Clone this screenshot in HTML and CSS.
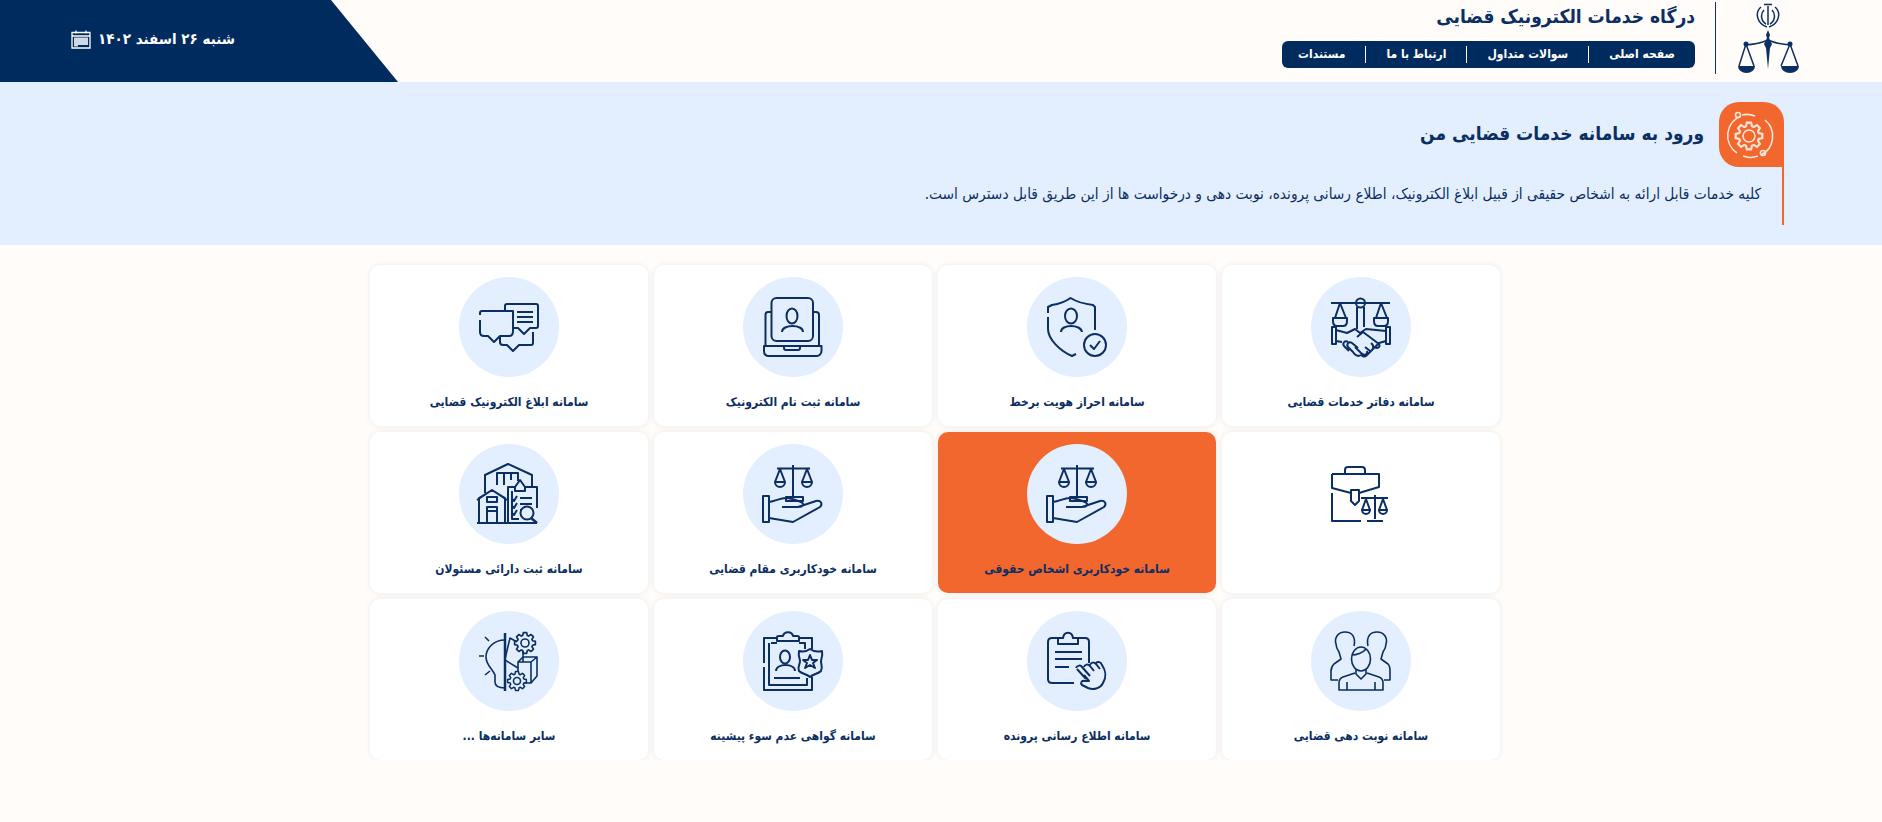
FILE: index.html
```html
<!DOCTYPE html>
<html lang="fa">
<head>
    <meta charset="UTF-8">
    <meta name="viewport" content="width=device-width, initial-scale=1.0">
    <title>درگاه خدمات الکترونیک قضایی</title>
    <link rel="stylesheet" href="styles.css">
</head>
<body>
    <svg class="defs" aria-hidden="true">
        <path id="gear" d="M-2.19-7.17-1.56-9.88 1.56-9.88 2.19-7.17 3.52-6.62 5.88-8.09 8.09-5.88 6.62-3.52 7.17-2.19 9.88-1.56 9.88 1.56 7.17 2.19 6.62 3.52 8.09 5.88 5.88 8.09 3.52 6.62 2.19 7.17 1.56 9.88-1.56 9.88-2.19 7.17-3.52 6.62-5.88 8.09-8.09 5.88-6.62 3.52-7.17 2.19-9.88 1.56-9.88-1.56-7.17-2.19-6.62-3.52-8.09-5.88-5.88-8.09-3.52-6.62Z"/>
        <g id="hand-scale">
            <path d="M34 24.5H67M50 21V53M37 25 32 38M37 25 42 38M64 25 59 38M64 25 69 38"/>
            <path d="M32 38H42A5 5 0 0 1 32 38ZM59 38H69A5 5 0 0 1 59 38ZM43 53H60V57H43Z"/>
            <path d="M20 52H26V78H20ZM26 58C33 57 37 54 43 54 48 54 53 56 58 58 62 60 60 63 55 63H39M55 63 73 57C78 56 80 60 77 63L50 78 26 74"/>
        </g>
    </svg>

    <header class="topbar">
        <div class="date-panel">
            <svg class="cal" viewBox="0 0 20 20" width="20" height="20">
                <path class="cal-line" d="M1 3.5H19V19H1ZM1 7H19M5 1.5V4.5M15 1.5V4.5"/>
                <path class="cal-grid" d="M3 8.5H17V16H7V17.5H3Z"/>
            </svg>
            <span>شنبه ۲۶ اسفند ۱۴۰۲</span>
        </div>
        <div class="brand">
            <div class="brand-text">
                <h1>درگاه خدمات الکترونیک قضایی</h1>
                <nav class="menu">
                    <a href="#">صفحه اصلی</a>
                    <a href="#">سوالات متداول</a>
                    <a href="#">ارتباط با ما</a>
                    <a href="#">مستندات</a>
                </nav>
            </div>
            <svg class="logo" viewBox="-9 0 94 72" width="94" height="72">
                <g class="logo-line">
                    <path d="M36 5C30 10 31 21 42 25M50 5C56 10 55 21 44 25M39 8C35 12 36 19 41 22M47 8C51 12 50 19 45 22"/>
                    <path d="M43 4V23M39 2.500H47"/>
                    <path d="M21 42 14 64M21 42 29 64M65 42 56 64M65 42 73 64M20 43C35 42 38 40 43 38 48 40 51 42 66 43"/>
                </g>
                <path class="logo-fill" d="M13 64H30A8.500 7 0 0 1 13 64ZM56 64H74A9 7 0 0 1 56 64ZM43 28 45 33 44 36 47 42 45 46 43 67 41 46 39 42 42 36 41 33Z"/>
                <circle class="logo-fill" cx="21" cy="42" r="2.500"/>
                <circle class="logo-fill" cx="65" cy="42" r="2.500"/>
            </svg>
        </div>
    </header>

    <section class="intro">
        <div class="intro-box">
            <div class="intro-head">
                <span class="intro-icon">
                    <svg viewBox="0 0 65 65" width="65" height="65">
                        <use href="#gear" transform="translate(30 34) scale(1.35)"/>
                        <circle cx="30" cy="34" r="6"/>
                        <path d="M22 14A21 21 0 0 0 18 51M42 53A21 21 0 0 0 46 18M23 13A21 21 0 0 1 36 14M24 54A21 21 0 0 0 39 54"/>
                        <circle cx="19" cy="13" r="2.500"/>
                        <circle cx="44" cy="51" r="2.500"/>
                    </svg>
                </span>
                <h2>ورود به سامانه خدمات قضایی من</h2>
            </div>
            <p>کلیه خدمات قابل ارائه به اشخاص حقیقی از قبیل ابلاغ الکترونیک، اطلاع رسانی پرونده، نوبت دهی و درخواست ها از این طریق قابل دسترس است.</p>
        </div>
    </section>

    <main class="systems">
        <a class="card" href="#">
            <div class="circle">
                <svg class="ic" viewBox="0 0 100 100">
                    <path d="M20 26H79M46 30V52M53 30V50M29 26 24 41M29 26 35 41M70 26 65 41M70 26 76 41"/>
                    <circle cx="49.500" cy="26" r="4.500"/>
                    <path d="M22 41H36V44C36 48 34 49 32 49H26C24 49 22 48 22 44ZM63 41H77V44C77 48 75 49 73 49H67C65 49 63 48 63 44Z"/>
                    <path d="M21 50H25V67H21ZM75 50H79V67H75ZM25 53 36 56 44 52 49 56 55 52 75 54M25 64 31 65M75 64 68 66 56 78C53 81 50 79 51 77M46 60 52 55 68 67C70 70 66 72 64 70M60 66C64 69 62 74 59 74L54 70M56 74C57 78 53 79 50 76L44 70M50 78C47 80 44 78 42 75L37 70C35 67 38 64 41 66L47 71M37 65C34 63 31 66 33 69L38 74"/>
                </svg>
            </div>
            <span class="label">سامانه دفاتر خدمات قضایی</span>
        </a>
        <a class="card" href="#">
            <div class="circle">
                <svg class="ic" viewBox="0 0 100 100">
                    <path d="M21 36V30L25 28C32 27 38 25 43.500 21 50 25 57 27 66 28L68 30V53M21 40V52C21 62 33 74 45 79L49 77"/>
                    <ellipse cx="44" cy="39" rx="6" ry="7.500"/>
                    <path d="M34 55C34 47 54 47 55 55"/>
                    <circle cx="68" cy="68" r="11"/>
                    <path d="M63 68 67 72 73 64"/>
                </svg>
            </div>
            <span class="label">سامانه احراز هویت برخط</span>
        </a>
        <a class="card" href="#">
            <div class="circle">
                <svg class="ic" viewBox="0 0 100 100">
                    <rect x="28.500" y="21" width="41.500" height="43" rx="5"/>
                    <ellipse cx="49" cy="39" rx="5.500" ry="7.500"/>
                    <path d="M39 55C39 47 60 47 60 55"/>
                    <path d="M28 35H25C23.500 35 22.500 36 22.500 38V68M70 35H73C75 35 76 36 76 38V68M21 69H78.500V74C78.500 77 76 79 74 79H26C23 79 21 77 21 74ZM41 69V71C41 72 42 73 43 73H55C56 73 57 72 57 71V69"/>
                </svg>
            </div>
            <span class="label">سامانه ثبت نام الکترونیک</span>
        </a>
        <a class="card" href="#">
            <div class="circle">
                <svg class="ic" viewBox="0 0 100 100">
                    <path d="M21 38V36C21 35 22 34 23 34H54V54C54 58 52 59 50 59H41L35 65 29 59H25C22 59 21 57 21 55V43"/>
                    <path d="M46 34V29C46 28 47 27 48 27H77C78 27 79 28 79 29V49C79 50 78 51 77 51H71L65 57 59 51H54"/>
                    <path d="M74 55V66C74 67 73 68 72 68H60L54 74 48 68H44C42 68 41 67 41 65V59"/>
                    <path d="M58 35H74M58 40H74M58 45H74"/>
                </svg>
            </div>
            <span class="label">سامانه ابلاغ الکترونیک قضایی</span>
        </a>

        <a class="card" href="#">
            <div class="circle circle-plain">
                <svg class="ic" viewBox="0 0 100 100">
                    <path d="M34 30V26C34 24 35 23 37 23H51C53 23 54 24 54 26V30"/>
                    <path d="M21 30H68V43L48 49M40 49 21 44V30M21 49V77H50"/>
                    <path d="M40 46H48V57L44 61 40 57Z"/>
                    <path d="M50 54H77M64 51V75M56 77H72M55 55 51 66M55 55 59 66M72 55 68 66M72 55 76 66"/>
                    <path d="M51 66H59A4 4 0 0 1 51 66ZM68 66H76A4 4 0 0 1 68 66Z"/>
                </svg>
            </div>
        </a>
        <a class="card card-active" href="#">
            <div class="circle">
                <svg class="ic" viewBox="0 0 100 100"><use href="#hand-scale"/></svg>
            </div>
            <span class="label">سامانه خودکاربری اشخاص حقوقی</span>
        </a>
        <a class="card" href="#">
            <div class="circle">
                <svg class="ic" viewBox="0 0 100 100"><use href="#hand-scale"/></svg>
            </div>
            <span class="label">سامانه خودکاربری مقام قضایی</span>
        </a>
        <a class="card" href="#">
            <div class="circle">
                <svg class="ic" viewBox="0 0 100 100">
                    <path d="M26 49V31L49 20 73 31V43M38 41V29H59V37M45 29V41M52 29V36"/>
                    <path d="M20 79V54L33 46 46 54V79M18 56 33 46 48 56M28 79V63H38V79M28 67H38M28 53H38V58H28ZM18 79H78"/>
                    <path d="M49 79V43H56M66 43H78V64M53 47V75H60"/>
                    <path d="M56 43 61 36 66 43V47H56Z"/>
                    <path d="M53 55 55 57 58 52M53 62 55 64 58 59M53 69 55 71 58 66M61 54H73M61 60H73M61 66H62"/>
                    <circle cx="68" cy="69" r="6.500"/>
                    <path d="M72 74 78 79" class="thick"/>
                </svg>
            </div>
            <span class="label">سامانه ثبت دارائی مسئولان</span>
        </a>

        <a class="card" href="#">
            <div class="circle">
                <svg class="ic thin" viewBox="0 0 100 100">
                    <ellipse cx="50" cy="48" rx="9.500" ry="12"/>
                    <path d="M41 44C45 44 52 42 55 38M45 59V63L50 68 55 63V59"/>
                    <path d="M44 62 32 66C29 67 28 69 28 72V79H72V72C72 69 71 67 68 66L56 62M36 79V71M64 79V71"/>
                    <path d="M43 35C45 26 41 21 34 21 27 21 23 27 25 33 25 36 26 38 28 41L30 48 23 53C21 55 20 57 20 60V69H27"/>
                    <path d="M57 35C55 26 59 21 66 21 73 21 77 27 75 33 75 36 74 38 72 41L70 48 77 53C79 55 79 57 79 60V69H73"/>
                </svg>
            </div>
            <span class="label">سامانه نوبت دهی قضایی</span>
        </a>
        <a class="card" href="#">
            <div class="circle">
                <svg class="ic" viewBox="0 0 100 100">
                    <path d="M31 27H25C22 27 21 29 21 31V68C21 71 22 72 25 72H47M51 27H58C61 27 62 29 62 31V52"/>
                    <path d="M31 33V27H36C37 20 45 20 46 27H51V33Z"/>
                    <path d="M28 41H55M28 48H55M28 56H42"/>
                    <path d="M50 58 59 68M49 57C50 54 54 54 55 56L63 65M57 56C58 53 61 53 63 55L67 60M63 54C64 51 67 51 69 53L73 58M69 52C71 50 74 51 75 54 79 60 80 65 76 72 73 78 66 79 61 77L55 74C53 72 55 69 57 70L62 70 57 64"/>
                </svg>
            </div>
            <span class="label">سامانه اطلاع رسانی پرونده</span>
        </a>
        <a class="card" href="#">
            <div class="circle">
                <svg class="ic" viewBox="0 0 100 100">
                    <path d="M34 27H21V52M21 56V79H69V66M56 27H69V38M26 32V74H64V67M34 32H28M56 32H62V38"/>
                    <path d="M34 30V26C34 25 35 25 36 25H40C41 20 49 20 50 25H54C55 25 56 25 56 26V30Z"/>
                    <ellipse cx="42" cy="46" rx="5" ry="6.500"/>
                    <path d="M33 60C33 52 52 52 52 60M31 67H57"/>
                    <path d="M67 38C71 41 75 41 79 40 80 45 78 48 78 50 78 54 80 56 78 60 75 63 70 63 67 66 64 63 59 63 56 60 54 56 57 54 57 50 57 48 55 45 56 40 60 41 63 41 67 38Z"/>
                    <path d="M67 44 69 49 74 49 70 52 72 57 67 54 62 57 64 52 60 49 65 49Z"/>
                </svg>
            </div>
            <span class="label">سامانه گواهی عدم سوء پیشینه</span>
        </a>
        <a class="card" href="#">
            <div class="circle">
                <svg class="ic thin" viewBox="0 0 100 100">
                    <path d="M46 22V80" class="thick"/>
                    <path d="M46 29C34 29 27 38 27 46 27 54 33 57 36 64V71C36 75 39 77 46 77"/>
                    <path d="M26 26 30 30M20 45H25M26 64 31 60"/>
                    <path d="M46 48 51 27 58 31M46 49 59 57"/>
                    <use href="#gear" transform="translate(66 32) scale(1.05)"/>
                    <circle cx="66" cy="32" r="4"/>
                    <path d="M64 40V51"/>
                    <path d="M59 51H72L78 46V65L72 72H59ZM59 51 64 46H78M72 51V72"/>
                    <use class="gear-bg" href="#gear" transform="translate(58 70) scale(.95)"/>
                    <circle cx="58" cy="70" r="3.500"/>
                </svg>
            </div>
            <span class="label">سایر سامانه‌ها ...</span>
        </a>
    </main>
</body>
</html>
```

FILE: styles.css
```css
body {
    margin: 0;
    background-color: #fffcf9;
    color: #0b2e63;
    font-family: "DejaVu Sans Condensed", "DejaVu Sans", sans-serif;
    font-stretch: condensed;
}
a {
    color: inherit;
    text-decoration: none;
}
.defs {
    position: absolute;
    width: 0;
    height: 0;
}

/* top bar */
.topbar {
    display: flex;
    justify-content: space-between;
    height: 82px;
}
.date-panel {
    display: flex;
    align-items: center;
    gap: 7px;
    box-sizing: border-box;
    width: 398px;
    padding: 0 0 4px 71px;
    background-color: #002b5e;
    color: #fff;
    font-size: 15px;
    font-weight: bold;
    clip-path: polygon(0 0, 331px 0, 398px 82px, 0 82px);
}
.cal {
    flex: none;
}
.cal-line {
    fill: none;
    stroke: #fff;
    stroke-width: 1.3;
}
.cal-grid {
    fill: #cfd8e4;
}
.brand {
    display: flex;
    align-items: flex-start;
    padding: 2px 72px 0 0;
}
.brand-text {
    direction: rtl;
    width: 413px;
    margin-right: 20px;
}
.brand-text h1 {
    margin: 0 0 11px;
    font-size: 19px;
    line-height: 28px;
    font-weight: bold;
}
.menu {
    display: flex;
    align-items: center;
    height: 27px;
    background-color: #002b5e;
    border-radius: 6px;
    color: #fff;
    font-size: 12px;
    font-weight: bold;
}
.menu a {
    padding: 0 20px;
    line-height: 17px;
    white-space: nowrap;
    border-left: 1px solid #fff;
}
.menu a:last-child {
    border-left: 0;
}
.logo {
    flex: none;
    border-left: 1px solid #0b2e63;
}
.logo-line {
    fill: none;
    stroke: #0b2e63;
    stroke-width: 1.5;
}
.logo-fill {
    fill: #0b2e63;
}

/* intro band */
.intro {
    height: 163px;
    padding: 20px 98px 0 0;
    box-sizing: border-box;
    background-color: #e3efff;
    direction: rtl;
}
.intro-head {
    display: flex;
    align-items: center;
    gap: 15px;
}
.intro-icon {
    display: block;
    width: 65px;
    height: 65px;
    background-color: #f1672e;
    border-radius: 20px 20px 0 20px;
}
.intro-icon svg {
    display: block;
    fill: none;
    stroke: #fde6d8;
    stroke-width: 1.600;
}
.intro-head h2 {
    margin: 0;
    padding-bottom: 4px;
    font-size: 19px;
    font-weight: bold;
}
.intro-box p {
    box-sizing: border-box;
    height: 58px;
    margin: 0;
    padding: 17px 21px 0 0;
    border-right: 2px solid #f1672e;
    font-size: 15.300px;
    line-height: 20px;
}

/* service cards */
.systems {
    display: grid;
    grid-template-columns: repeat(4, 278px);
    grid-auto-rows: 161px;
    gap: 6px;
    margin: 20px 0 0 370px;
    width: 1130px;
    direction: rtl;
}
.card {
    display: flex;
    flex-direction: column;
    align-items: center;
    padding-top: 12px;
    background-color: #fff;
    border-radius: 10px;
    box-shadow: 0 0 6px rgba(20, 50, 90, 0.08);
}
.card-active {
    background-color: #f1672e;
}
.circle {
    width: 100px;
    height: 100px;
    border-radius: 50%;
    background-color: #e3efff;
}
.circle-plain {
    background-color: transparent;
}
.ic {
    display: block;
    width: 100px;
    height: 100px;
    fill: none;
    stroke: #0b2e63;
    stroke-width: 2;
    stroke-linejoin: round;
}
.ic.thin {
    stroke-width: 1.600;
}
.ic .thick {
    stroke-width: 2.500;
}
.gear-bg {
    fill: #e3efff;
}
.label {
    margin-top: 15px;
    font-size: 12px;
    line-height: 20px;
    font-weight: bold;
}
```
